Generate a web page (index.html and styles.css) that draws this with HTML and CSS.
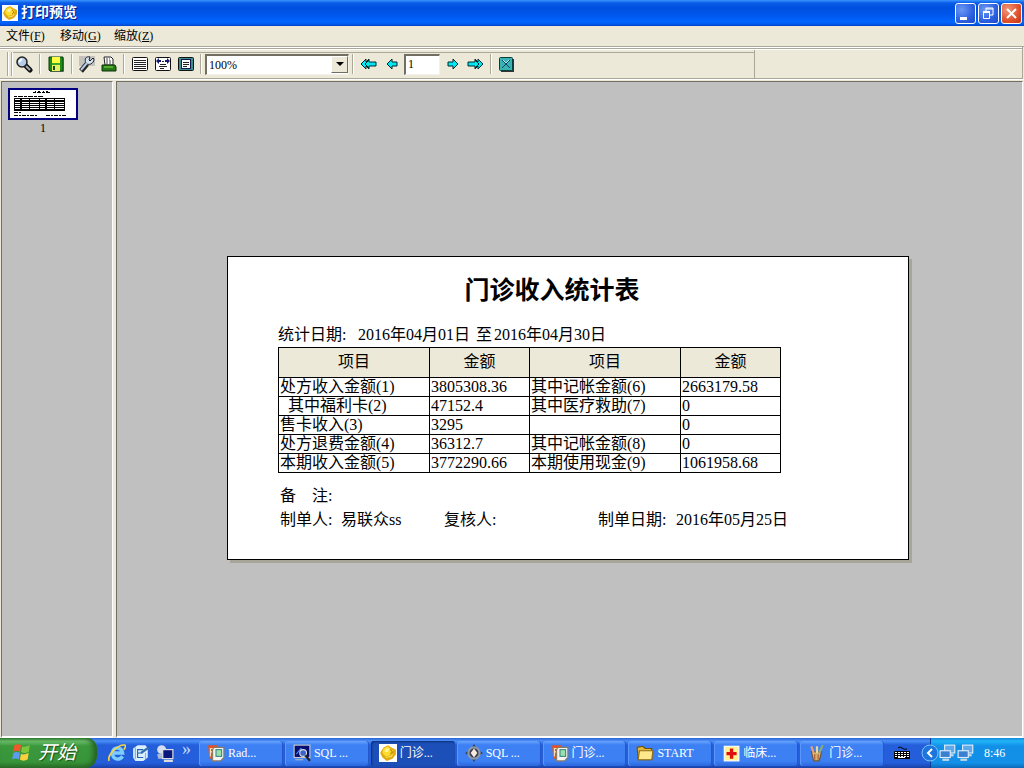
FILE: index.html
```
<!DOCTYPE html>
<html lang="zh-CN">
<head>
    <meta charset="UTF-8">
    <meta name="viewport" content="width=device-width, initial-scale=1.0">
    <title>打印预览</title>
    <link rel="stylesheet" href="styles.css">
</head>
<body>
    <!-- shared shapes -->
    <svg class="defs" width="0" height="0" aria-hidden="true">
        <defs>
            <symbol id="logo" viewBox="0 0 16 16">
                <rect width="16" height="16" fill="#fff"/>
                <path d="M8 1L11 3L15 5V9L12 13L7 15L3 12L1 8L4 3Z" fill="#e0ac10"/>
                <path d="M8 2L11 5L13 6L10 10L6 11L3 8L4 4Z" fill="#ffdc32"/>
                <path d="M6 4L9 4L8 7L5 7Z" fill="#fff3a0"/>
                <path d="M10 5L12 7L10 9" fill="none" stroke="#b88a08"/>
                <path d="M6 12L11 11L12 9" fill="none" stroke="#f8e060"/>
            </symbol>
            <symbol id="arrow" viewBox="0 0 12 12">
                <path d="M1 6L6 1V4H11V8H6V11Z" fill="#00e8f0" stroke="#00282c"/>
            </symbol>
            <symbol id="arrow-double" viewBox="0 0 17 12">
                <path d="M1 6L6 1V4L9 1V4H16V8H9V11L6 8V11Z" fill="#00e8f0" stroke="#00282c"/>
                <path d="M5 6L9 2M5 6L9 10" fill="none" stroke="#00282c"/>
            </symbol>
            <symbol id="pb" viewBox="0 0 16 16">
                <path d="M1 1H9V13H2Z" fill="#e8501c"/>
                <path d="M3 11V4H6V7H3" fill="none" stroke="#ffe2b0"/>
                <path d="M6 3H15V12L12 15H5V5Z" fill="#f4f4f0" stroke="#8a7a66"/>
                <rect x="8" y="5" width="5" height="6" fill="#9ce0a8" stroke="#3c8c8c"/>
            </symbol>
            <symbol id="net" viewBox="0 0 16 16">
                <rect x="5" y="1" width="9" height="7" fill="#5fa8ea" stroke="#dfeefa"/>
                <path d="M8 10H13" stroke="#c4d8ea" stroke-width="2"/>
                <rect x="1" y="6" width="9" height="6" fill="#3a7fd0" stroke="#dfeefa"/>
                <path d="M3 14H9" stroke="#c4d8ea" stroke-width="2"/>
            </symbol>
        </defs>
    </svg>

    <header class="titlebar">
        <svg class="icon"><use href="#logo"/></svg>
        <h1>打印预览</h1>
        <div class="window-buttons">
            <button type="button" aria-label="最小化"><svg viewBox="0 0 19 19"><path d="M4 13H11V16H4Z" fill="#fff"/></svg></button>
            <button type="button" aria-label="还原"><svg viewBox="0 0 19 19"><path d="M7 7V4H14V11H11M7 5H14" fill="none" stroke="#fff"/><path d="M4.500 8V14.500H10.500V8Z" fill="none" stroke="#fff"/><path d="M4 8H11" stroke="#fff" stroke-width="2"/></svg></button>
            <button type="button" class="close" aria-label="关闭"><svg viewBox="0 0 19 19"><path d="M5 5L14 14M14 5L5 14" stroke="#fff" stroke-width="2"/></svg></button>
        </div>
    </header>

    <nav class="menubar">
        <button type="button">文件(<u>F</u>)</button>
        <button type="button">移动(<u>G</u>)</button>
        <button type="button">缩放(<u>Z</u>)</button>
    </nav>

    <div class="toolbar-dock">
        <div class="toolbar">
            <span class="grip"></span>
            <button type="button" class="tool" aria-label="查找">
                <svg viewBox="0 0 18 18"><path d="M10 10L15 15" stroke="#111" stroke-width="5" stroke-linecap="round"/><path d="M11 11L15 15" stroke="#a8acb8" stroke-width="2"/><circle cx="7" cy="7" r="5" fill="#b4cce8" stroke="#222" stroke-width="1.500"/><path d="M4 7L7 4" stroke="#fff" stroke-width="2"/></svg>
            </button>
            <span class="sep"></span>
            <button type="button" class="tool" aria-label="保存">
                <svg viewBox="0 0 18 18"><path d="M3 3H17V17H3Z" fill="#888"/><path d="M2 2H16V16H3L2 15Z" fill="#1c8c1c" stroke="#063806"/><rect x="5" y="2" width="8" height="6" fill="#ffff40"/><rect x="5" y="10" width="8" height="6" fill="#e8f060"/><path d="M6 11H8V15H6Z" fill="#144c14"/><path d="M5 9H13" stroke="#5ccc30"/></svg>
            </button>
            <span class="sep"></span>
            <button type="button" class="tool pair" aria-label="设置">
                <svg viewBox="0 0 18 18"><path d="M1 1H17V11H1Z" fill="#c4c2bc"/><path d="M3 16L9 9" stroke="#222" stroke-width="5"/><path d="M15 3L12 6L11 5L12 2C8 1 6 4 8 8C10 11 16 9 16 4Z" fill="#d4e2f2" stroke="#222"/><path d="M3 15L9 8" stroke="#b4cce8" stroke-width="2"/></svg>
            </button>
            <button type="button" class="tool pair" aria-label="打印">
                <svg viewBox="0 0 18 18"><path d="M5 10L4 2H11L13 4V10Z" fill="#fff" stroke="#222"/><path d="M6 4H10M6 6H11M6 8H11" stroke="#444" stroke-dasharray="2 1"/><path d="M2 10H15L16 12V16H2Z" fill="#257a18" stroke="#0c3008"/><path d="M4 12H13" stroke="#8ce040"/></svg>
            </button>
            <span class="sep"></span>
            <button type="button" class="tool view" aria-label="整页">
                <svg viewBox="0 0 18 18"><rect x="1.500" y="2.500" width="15" height="13" rx="1" fill="#fff" stroke="#111"/><path d="M3 5.500H15M3 7.500H15M3 9.500H15M3 11.500H15M3 13.500H15" stroke="#222"/></svg>
            </button>
            <button type="button" class="tool view" aria-label="页宽">
                <svg viewBox="0 0 18 18"><rect x="1.500" y="2.500" width="15" height="13" rx="1" fill="#fff" stroke="#111"/><path d="M2 6L5 3V5H7V7H5V9ZM16 6L13 3V5H11V7H13V9Z" fill="#101870"/><path d="M8 6.500H10M6 9.500H12M5 11.500H13M6 13.500H10" stroke="#222"/></svg>
            </button>
            <button type="button" class="tool view" aria-label="实际大小">
                <svg viewBox="0 0 18 18"><rect x="1.500" y="2.500" width="15" height="13" rx="1" fill="#3c9090" stroke="#111"/><rect x="4.500" y="4.500" width="9" height="9" fill="#fff" stroke="#101850"/><path d="M6 7.500H12M6 9.500H12M6 11.500H10" stroke="#222"/></svg>
            </button>
            <span class="sep"></span>
            <div class="zoom">
                <select aria-label="缩放比例"><option>100%</option><option>50%</option><option>200%</option></select>
                <span class="drop"><svg viewBox="0 0 8 4"><path d="M0 0H8L4 4Z"/></svg></span>
            </div>
            <span class="sep"></span>
            <button type="button" class="tool nav" aria-label="首页"><svg class="double"><use href="#arrow-double"/></svg></button>
            <button type="button" class="tool nav" aria-label="上一页"><svg class="single"><use href="#arrow"/></svg></button>
            <input class="page-no" type="text" value="1" aria-label="页码">
            <button type="button" class="tool nav" aria-label="下一页"><svg class="single next"><use href="#arrow"/></svg></button>
            <button type="button" class="tool nav" aria-label="末页"><svg class="double next"><use href="#arrow-double"/></svg></button>
            <span class="sep"></span>
            <button type="button" class="tool pair" aria-label="关闭预览">
                <svg viewBox="0 0 18 18"><path d="M4 4H17V17H4Z" fill="#333"/><rect x="2.500" y="2.500" width="13" height="13" rx="1" fill="#38b4b0" stroke="#083c40"/><path d="M5 5L13 13M13 5L5 13" stroke="#123a70"/><path d="M6 5L9 8L12 5" fill="none" stroke="#b8ecec"/></svg>
            </button>
        </div>
    </div>

    <main class="workspace">
        <aside class="thumbs">
            <a class="thumb" href="#sheet">
                <svg viewBox="0 0 66 28">
                    <path d="M23 2.500H40" stroke="#000" stroke-dasharray="3 1 4 1"/>
                    <path d="M25 1.500H38" stroke="#000" stroke-dasharray="1 2 2 3"/>
                    <path d="M4 6.500H34" stroke="#000" stroke-dasharray="3 1 5 1"/>
                    <rect x="4" y="8" width="51" height="13" fill="#000"/>
                    <path d="M5 9.500H54M5 12.500H54M5 14.500H54M5 16.500H54M5 18.500H54" stroke="#fff" stroke-dasharray="5 2 7 1 9 1"/>
                    <path d="M4 22.500H11M4 25.500H28M36 25.500H56" stroke="#000" stroke-dasharray="4 1 2 1"/>
                </svg>
                <span>1</span>
            </a>
        </aside>

        <section class="canvas">
            <article class="sheet" id="sheet">
                <h2>门诊收入统计表</h2>
                <div class="period">
                    <span>统计日期:</span>
                    <span>2016年04月01日</span>
                    <span>至</span>
                    <span>2016年04月30日</span>
                </div>
                <table>
                    <colgroup><col class="name"><col class="amount"><col class="name"><col class="amount"></colgroup>
                    <thead>
                        <tr><th>项目</th><th>金额</th><th>项目</th><th>金额</th></tr>
                    </thead>
                    <tbody>
                        <tr><td>处方收入金额(1)</td><td>3805308.36</td><td>其中记帐金额(6)</td><td>2663179.58</td></tr>
                        <tr><td class="sub">其中福利卡(2)</td><td>47152.4</td><td>其中医疗救助(7)</td><td>0</td></tr>
                        <tr><td>售卡收入(3)</td><td>3295</td><td></td><td>0</td></tr>
                        <tr><td>处方退费金额(4)</td><td>36312.7</td><td>其中记帐金额(8)</td><td>0</td></tr>
                        <tr><td>本期收入金额(5)</td><td>3772290.66</td><td>本期使用现金(9)</td><td>1061958.68</td></tr>
                    </tbody>
                </table>
                <div class="remark">备　注:</div>
                <div class="sign">
                    <span>制单人:</span>
                    <span>易联众ss</span>
                    <span>复核人:</span>
                    <span>制单日期:</span>
                    <span>2016年05月25日</span>
                </div>
            </article>
        </section>
    </main>

    <footer class="taskbar">
        <button type="button" class="start">
            <svg viewBox="0 0 20 20"><path d="M4 3Q7 1 10 3L9 9Q6 7 3 9Z" fill="#f0582c"/><path d="M11 4Q14 5 18 3L17 9Q13 11 10 9Z" fill="#7cc63c"/><path d="M3 10Q6 8 9 10L8 16Q5 14 2 16Z" fill="#5c9cf0"/><path d="M10 11Q13 12 17 10L16 16Q12 18 9 16Z" fill="#fcd03c"/></svg>
            <span>开始</span>
        </button>
        <div class="quick">
            <button type="button" aria-label="浏览器"><svg class="icon" viewBox="0 0 16 16"><path d="M13 11C10 15 4 14 4 8S12 2 13 8H5" fill="none" stroke="#7cccff" stroke-width="3"/><path d="M1 15C-1 10 9 0 15 1C16 2 15 4 14 5" fill="none" stroke="#f4d44c" stroke-width="1.500"/></svg></button>
            <button type="button" aria-label="邮件"><svg class="icon" viewBox="0 0 16 16"><path d="M1 4L5 1H12L14 4V12L10 15H3L1 12Z" fill="#dcefff"/><path d="M10 5H5V12H10M5 8H9" fill="none" stroke="#1c64b4"/><path d="M3 3V13M12 8V13" stroke="#78b0e4"/><path d="M8 8L15 3" stroke="#346cac" stroke-width="2"/></svg></button>
            <button type="button" aria-label="连接"><svg class="icon" viewBox="0 0 16 16"><circle cx="5" cy="5" r="4" fill="#d4e0f0"/><path d="M1 9L9 7V13H2Z" fill="#a8bcd8"/><rect x="6" y="5" width="9" height="8" fill="#08187c" stroke="#e8e8e8"/><path d="M7 15H15" stroke="#dcdcdc" stroke-width="2"/></svg></button>
            <button type="button" class="more" aria-label="更多">»</button>
        </div>
        <div class="tasks">
            <button type="button"><svg class="icon"><use href="#pb"/></svg>Rad...</button>
            <button type="button"><svg class="icon" viewBox="0 0 16 16"><rect x="1" y="1" width="14" height="11" fill="#060c70" stroke="#c8c8c8"/><path d="M3 9L7 4L12 8" fill="none" stroke="#4890f0"/><circle cx="9" cy="8" r="3" fill="#3c64c8" stroke="#d8d8d8"/><path d="M11 10L15 15" stroke="#222" stroke-width="2"/><path d="M2 14H9" stroke="#bbb"/></svg>SQL ...</button>
            <button type="button" class="active"><svg class="icon"><use href="#logo"/></svg>门诊...</button>
            <button type="button"><svg class="icon" viewBox="0 0 16 16"><path d="M8 0L11 5L16 8L11 11L8 16L5 11L0 8L5 5Z" fill="#343c4c"/><circle cx="8" cy="8" r="5" fill="none" stroke="#8c98a8" stroke-width="2"/><path d="M8 4L11 8L8 12L5 8Z" fill="#f8e8e0"/></svg>SQL ...</button>
            <button type="button"><svg class="icon"><use href="#pb"/></svg>门诊...</button>
            <button type="button"><svg class="icon" viewBox="0 0 16 16"><path d="M1 3L6 2L8 4H14V14H2Z" fill="#e8b838" stroke="#6c5410"/><path d="M2 14L3 6H15L14 14Z" fill="#ffe88c" stroke="#8c6c18"/></svg>START</button>
            <button type="button"><svg class="icon" viewBox="0 0 16 16"><rect x="2" y="2" width="13" height="13" fill="#fff490" stroke="#fff"/><path d="M7 4H10V7H13V10H10V13H7V10H4V7H7Z" fill="#e01010"/></svg>临床...</button>
            <button type="button"><svg class="icon" viewBox="0 0 16 16"><path d="M3 7H12L10 15H5Z" fill="#d8b070" stroke="#6c5430"/><path d="M5 8L3 2" stroke="#e8a070" stroke-width="2"/><path d="M8 8V2" stroke="#e8d8a0" stroke-width="2"/><path d="M10 8L13 1" stroke="#8cac70" stroke-width="2"/><path d="M6 9V14M9 9V14" stroke="#a85838"/></svg>门诊...</button>
        </div>
        <button type="button" class="ime" aria-label="输入法"><svg viewBox="0 0 16 16"><path d="M4 3Q6 1 8 3T13 4" fill="none" stroke="#000"/><rect x="0" y="6" width="16" height="8" rx="1" fill="#000"/><path d="M1 7.500H15M1 9.500H15M1 11.500H15" stroke="#fff" stroke-dasharray="2 1"/><path d="M4 12.500H11" stroke="#fff"/></svg></button>
        <div class="tray">
            <button type="button" class="chevron" aria-label="隐藏图标"><svg viewBox="0 0 18 18"><circle cx="9" cy="9" r="8" fill="#1c74dc" stroke="#7cc4f8"/><path d="M11 5L7 9L11 13" fill="none" stroke="#fff" stroke-width="2"/></svg></button>
            <svg class="icon"><use href="#net"/></svg>
            <svg class="icon"><use href="#net"/></svg>
            <time>8:46</time>
        </div>
    </footer>
</body>
</html>
```
FILE: styles.css
```
* {
    box-sizing: border-box;
}

body {
    display: flex;
    flex-direction: column;
    height: 100vh;
    margin: 0;
    overflow: hidden;
    background: #ece9d8;
    color: #000;
    font-family: "Liberation Serif", "Noto Sans CJK SC", serif;
    font-size: 12px;
    line-height: 16px;
}

button, input, select {
    font: inherit;
    color: inherit;
    border-radius: 0;
}

button {
    padding: 0;
    border: none;
    background: none;
}

svg {
    display: block;
    flex: none;
}

.defs {
    position: absolute;
}

.icon {
    width: 18px;
    height: 18px;
}

/* title bar */
.titlebar {
    display: flex;
    align-items: center;
    flex: none;
    height: 26px;
    padding: 0 2px;
    background: linear-gradient(#3c96ff 0, #0a5ce8 3px, #0050e0 8px, #0058ee 16px, #0066ff 22px, #0054e0 25px, #003cc0 26px);
    color: #fff;
}

.titlebar .icon {
    width: 16px;
    height: 16px;
}

.titlebar h1 {
    flex: 1;
    margin: 0 0 0 3px;
    font-size: 14px;
    text-shadow: 1px 1px #0a1883;
}

.window-buttons {
    display: flex;
    gap: 2px;
}

.window-buttons button {
    width: 21px;
    height: 21px;
    border: 1px solid #fff;
    border-radius: 3px;
    background: radial-gradient(circle at 30% 30%, #6a98f4, #2c60e0 60%, #1c48c4);
}

.window-buttons .close {
    background: radial-gradient(circle at 30% 30%, #f09878, #e0502c 60%, #c03410);
}

/* menu */
.menubar {
    display: flex;
    flex: none;
    height: 21px;
    padding: 0 6px;
    border-bottom: 1px solid #aca899;
}

.menubar button {
    width: 54px;
    text-align: left;
}

/* toolbar */
.toolbar-dock {
    flex: none;
    height: 32px;
    margin-right: 1px;
    padding-top: 3px;
    border: 1px solid #aca899;
    border-top: 0;
    border-left: 0;
    box-shadow: inset 0 1px #fff, inset 0 2px #aca899, inset 0 3px #fff;
}

.toolbar {
    display: flex;
    align-items: center;
    width: 755px;
    height: 28px;
    padding-left: 7px;
    border-right: 1px solid #aca899;
    background: linear-gradient(#aca899, #aca899) 12px 2px / 100% 1px no-repeat;
}

.grip {
    width: 5px;
    height: 24px;
    border: solid #aca899;
    border-width: 0 1px;
    box-shadow: inset 1px 0 #fff, 1px 0 #fff;
}

.sep {
    width: 2px;
    height: 20px;
    margin: 0 3px;
    border-left: 1px solid #aca899;
    border-right: 1px solid #fff;
}

.tool {
    display: flex;
    align-items: center;
    justify-content: center;
    width: 24px;
    height: 22px;
}

.tool svg {
    width: 18px;
    height: 18px;
}

.tool.pair {
    width: 22px;
}

.tool.view, .tool.nav {
    width: 23px;
}

.tool .single {
    width: 12px;
    height: 12px;
}

.tool .double {
    width: 17px;
    height: 12px;
}

.next {
    transform: scaleX(-1);
}

.zoom {
    position: relative;
    width: 144px;
}

.zoom select, .page-no {
    height: 21px;
    padding: 0 2px;
    border: 1px solid #f4f2e8;
    border-top: 2px solid #716f64;
    border-left: 2px solid #716f64;
    background: #fff;
}

.zoom select {
    display: block;
    width: 100%;
    appearance: none;
}

.drop {
    position: absolute;
    top: 2px;
    right: 1px;
    display: flex;
    align-items: center;
    justify-content: center;
    width: 17px;
    height: 17px;
    border: 1px solid;
    border-color: #fff #716f64 #716f64 #fff;
    background: #ece9d8;
    pointer-events: none;
}

.drop svg {
    width: 8px;
    height: 4px;
}

.page-no {
    width: 36px;
    margin: 0 1px;
}

/* preview area */
.workspace {
    display: flex;
    flex: 1;
    min-height: 0;
    gap: 3px;
    padding: 1px 1px 0 1px;
    border-top: 1px solid #fff;
}

.thumbs, .canvas {
    border: 1px solid #fff;
    border-top-color: #716f64;
    border-left-color: #716f64;
    border-bottom-width: 2px;
    background: #c0c0c0;
}

.thumbs {
    flex: none;
    width: 112px;
    padding: 6px;
}

.thumb {
    display: block;
    width: 70px;
    color: #000;
    text-align: center;
    text-decoration: none;
}

.thumb svg {
    width: 70px;
    height: 32px;
    border: 2px solid #000080;
    background: #fff;
}

.canvas {
    display: flex;
    align-items: center;
    justify-content: center;
    flex: 1;
    min-width: 0;
    padding: 0 3px 3px 0;
    overflow: auto;
}

/* printed page */
.sheet {
    flex: none;
    width: 682px;
    padding: 20px 50px 30px;
    border: 1px solid #000;
    background: #fff;
    box-shadow: 3px 3px #a8a698;
    font-size: 16px;
    line-height: 18px;
}

.sheet h2 {
    margin: 0 0 21px;
    padding-right: 32px;
    font-size: 25px;
    line-height: 28px;
    text-align: center;
}

.period, .sign {
    display: grid;
    white-space: nowrap;
}

.period {
    grid-template-columns: 80px 118px 18px 1fr;
    margin-bottom: 3px;
}

.sheet table {
    table-layout: fixed;
    width: 503px;
    border-collapse: collapse;
}

.name {
    width: 151px;
}

.amount {
    width: 100px;
}

.sheet th, .sheet td {
    height: 19px;
    padding: 0 1px;
    border: 1px solid #000;
    font-weight: normal;
    text-align: left;
    white-space: nowrap;
}

.sheet th {
    height: 30px;
    background: #ece9d8;
    text-align: center;
}

.sheet td.sub {
    padding-left: 9px;
}

.remark {
    margin: 14px 0 6px 2px;
}

.sign {
    grid-template-columns: 61px 103px 154px 78px 1fr;
    margin-left: 2px;
}

/* taskbar */
.taskbar {
    display: flex;
    align-items: center;
    flex: none;
    height: 30px;
    background: linear-gradient(#2a62d4 0, #4a90f8 3px, #245edb 7px, #245edb 25px, #1941a5 30px);
    color: #fff;
}

.start {
    display: flex;
    align-items: center;
    gap: 6px;
    width: 97px;
    height: 30px;
    padding-left: 10px;
    border-radius: 0 10px 12px 0;
    background: linear-gradient(#3c8c3c 0, #6cc06c 3px, #3c983c 8px, #389438 24px, #2a702a 30px);
    box-shadow: inset -4px 0 5px #246424;
    font-size: 19px;
    font-style: italic;
    text-shadow: 1px 1px 1px #1c501c;
}

.start svg {
    width: 22px;
    height: 22px;
}

.quick {
    display: flex;
    align-items: center;
    gap: 6px;
    width: 102px;
    padding-left: 11px;
}

.quick .more {
    margin: -8px 0 0 2px;
    color: #c8dcff;
    font-size: 18px;
}

.tasks {
    display: flex;
    flex: 1;
    gap: 2px;
    min-width: 0;
}

.tasks button {
    display: flex;
    align-items: center;
    flex: 1;
    gap: 3px;
    min-width: 0;
    height: 25px;
    padding-left: 8px;
    border-radius: 3px;
    background: linear-gradient(#6ca4fc 0, #3c80f4 4px, #3c80f4 20px, #2c68dc 25px);
    box-shadow: inset 1px 0 #5c98fc, inset -1px 0 #2458c8;
    white-space: nowrap;
    overflow: hidden;
}

.tasks .active {
    background: #1c50b8;
    box-shadow: inset 1px 1px 2px #0c2c74;
}

.ime {
    width: 46px;
    padding-left: 10px;
}

.ime svg {
    width: 16px;
    height: 16px;
}

.tray {
    position: relative;
    display: flex;
    align-items: center;
    width: 94px;
    height: 30px;
    padding-left: 8px;
    border-left: 1px solid #0c3c94;
    background: linear-gradient(#1888dc 0, #20b4f8 3px, #1290e8 8px, #1290e8 25px, #0c68b8 30px);
}

.tray time {
    margin-left: 9px;
}

.chevron {
    position: absolute;
    top: 6px;
    left: -10px;
}

.chevron svg {
    width: 18px;
    height: 18px;
}
```
